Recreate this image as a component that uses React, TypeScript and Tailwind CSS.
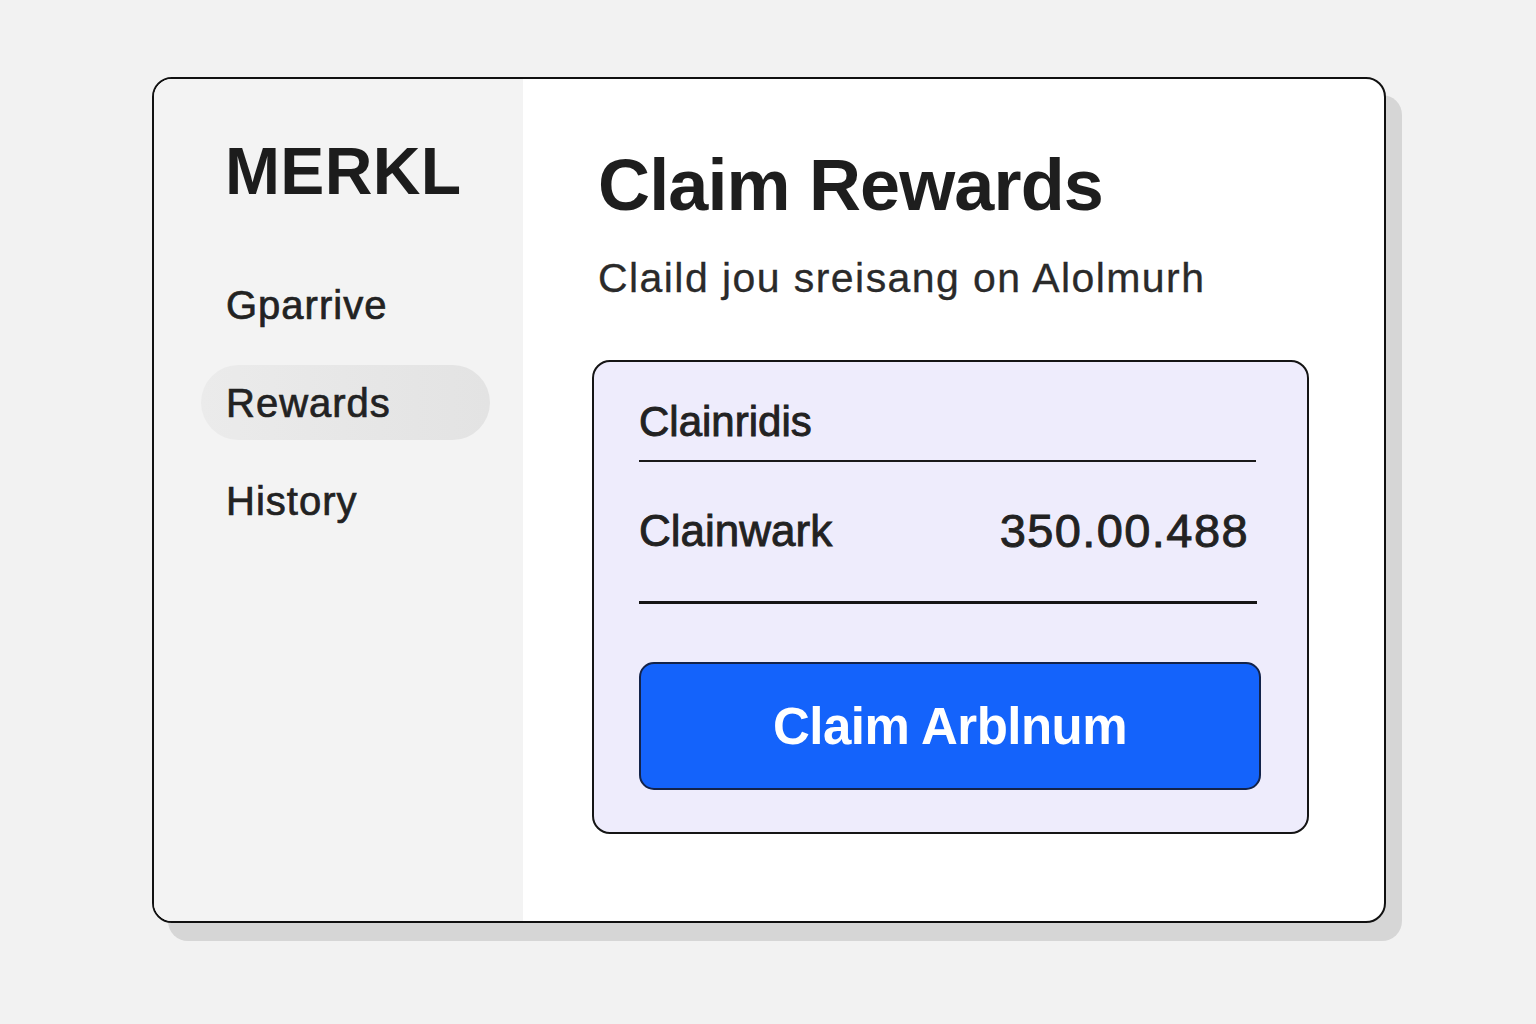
import { useState } from 'react';

const navItems = ['Gparrive', 'Rewards', 'History'];

export default function App() {
  const [active, setActive] = useState('Rewards');

  return (
    <div className="min-h-screen w-full bg-[#f2f2f2] pl-[152px] pt-[77px] font-['Liberation_Sans',Arial,sans-serif] text-[#1f1f1f]">
      {/* Card */}
      <div className="flex h-[846px] w-[1234px] overflow-hidden rounded-[20px] border-2 border-[#111] bg-white shadow-[16px_18px_0_0_#d6d6d6]">
        {/* Sidebar */}
        <aside className="flex w-[369px] shrink-0 flex-col bg-[#f3f3f3] pt-[59px]">
          <div className="pl-[71px] text-[66px] font-bold leading-none tracking-[0.005em] text-[#1c1c1c]">
            MERKL
          </div>
          <nav className="mt-[63px] flex flex-col gap-[23px] pl-[47px]">
            {navItems.map((item) => (
              <button
                key={item}
                onClick={() => setActive(item)}
                className={`flex h-[75px] w-[289px] items-center rounded-full px-[25px] text-left text-[40px] leading-none tracking-[0.025em] text-[#222] [-webkit-text-stroke:0.7px_#222] ${
                  active === item ? 'bg-gradient-to-r from-[#ebebeb] to-[#e3e3e3]' : ''
                }`}
              >
                {item}
              </button>
            ))}
          </nav>
        </aside>

        {/* Main */}
        <main className="flex flex-1 flex-col pl-[69px] pt-[70px]">
          <h1 className="pl-[6px] text-[72px] font-bold leading-none tracking-[-0.012em] text-[#1e1e1e]">
            Claim Rewards
          </h1>
          <p className="mt-[37px] pl-[6px] text-[41px] leading-none tracking-[0.035em] text-[#2a2a2a] [-webkit-text-stroke:0.3px_#2a2a2a]">
            Claild jou sreisang on Alolmurh
          </p>

          {/* Claim panel */}
          <section className="mt-[61px] flex h-[474px] w-[717px] flex-col rounded-[18px] border-2 border-[#151515] bg-[#eeecfc] pl-[45px] pt-[39px]">
            <h2 className="text-[42px] leading-none text-[#222] [-webkit-text-stroke:0.9px_#222]">
              Clainridis
            </h2>
            <div className="mt-[17px] h-[2px] w-[617px] bg-[#1a1a1a]" />
            <div className="mt-[45px] flex w-[610px] items-center justify-between">
              <span className="text-[44px] leading-none text-[#222] [-webkit-text-stroke:0.9px_#222]">
                Clainwark
              </span>
              <span className="text-[47px] leading-none tracking-[0.03em] text-[#222] [-webkit-text-stroke:0.9px_#222]">
                350.00.488
              </span>
            </div>
            <div className="mt-[47px] h-[3px] w-[618px] bg-[#151515]" />
            <button className="mt-[58px] flex h-[128px] w-[622px] items-center justify-center rounded-[15px] border-2 border-[#13234a] bg-[#1463fb] text-[51px] font-bold leading-none tracking-[-0.01em] text-white">
              Claim Arblnum
            </button>
          </section>
        </main>
      </div>
    </div>
  );
}
